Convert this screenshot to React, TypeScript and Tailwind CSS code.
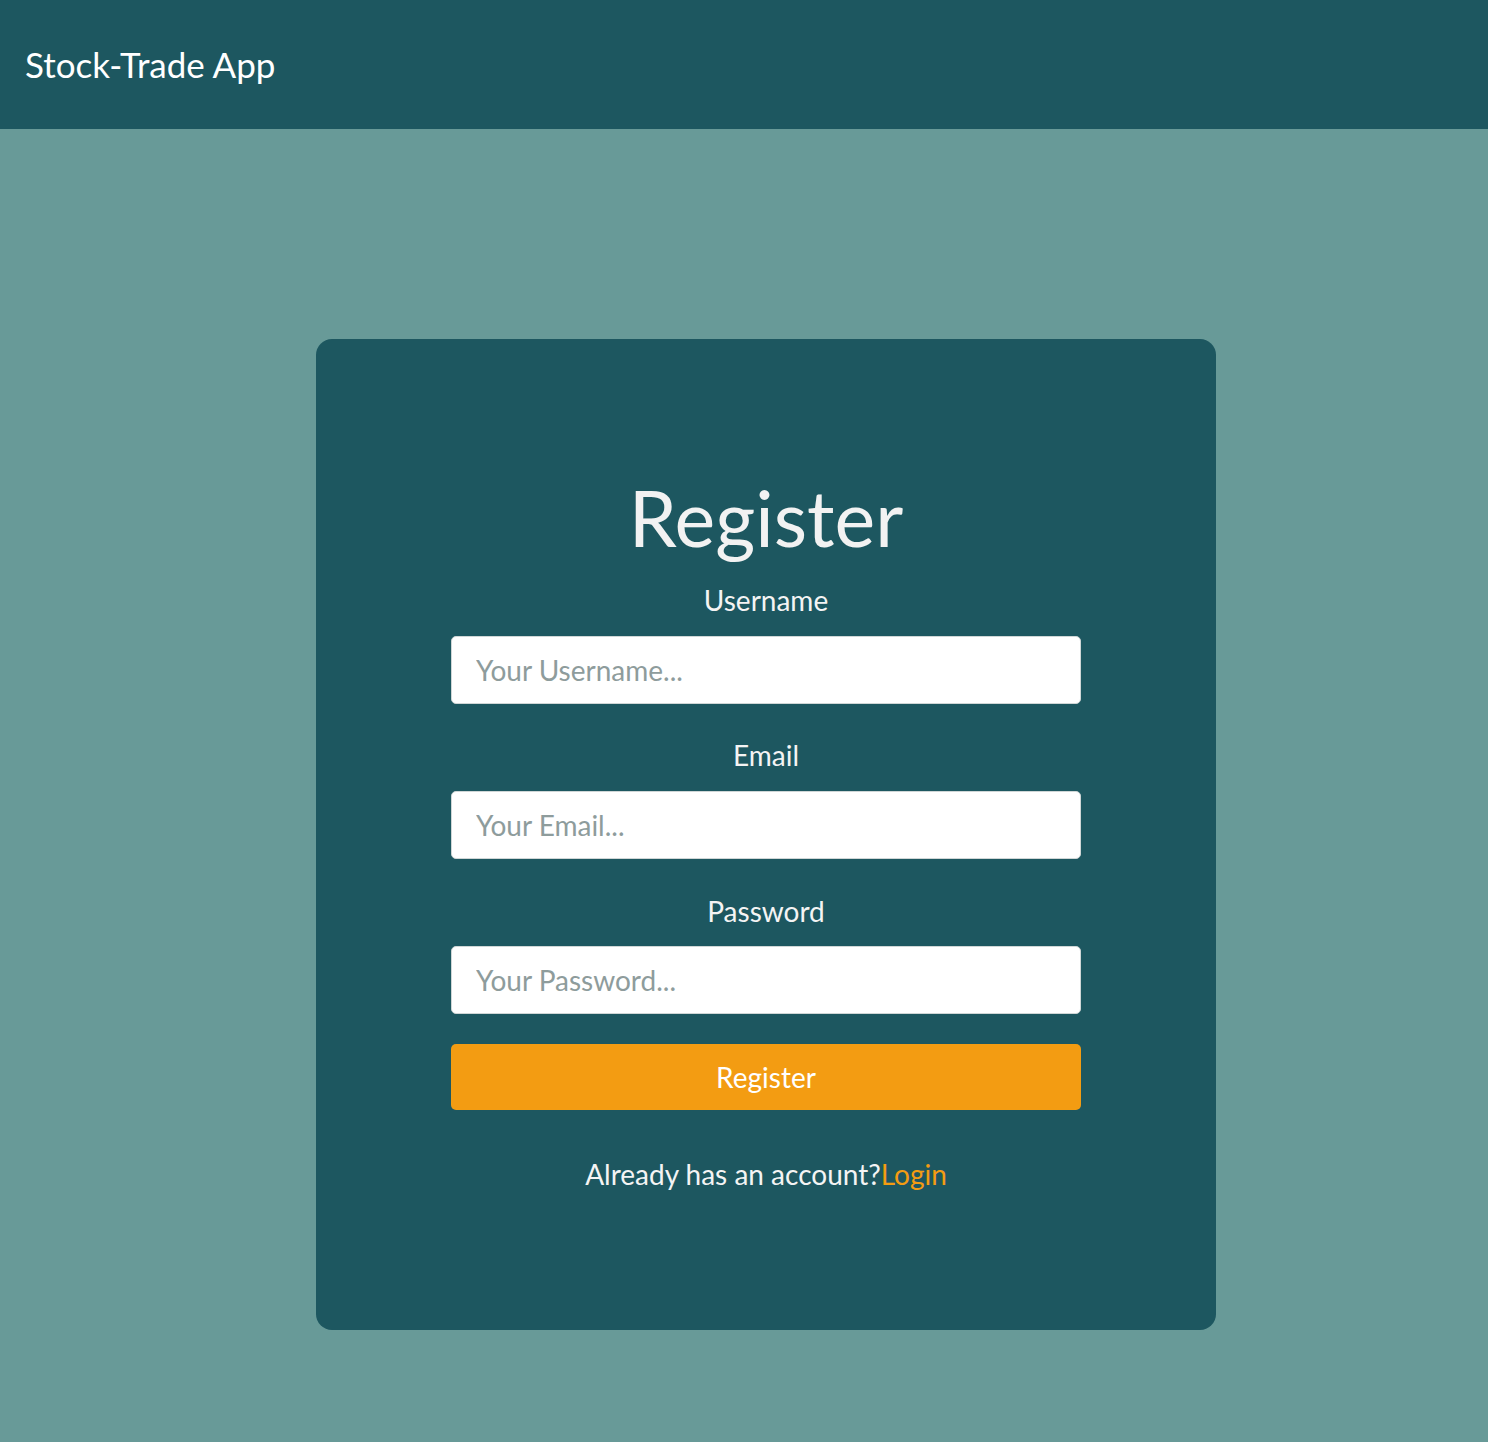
import { useState } from "react";

const inputCls =
  "w-full h-[68px] rounded-[5px] border border-[#cfd6d6] bg-white px-[24px] text-[28px] text-[#333] placeholder:text-[#8e9c9c] outline-none";

const labelCls = "block text-center text-[28px] leading-[1.2] text-[#f4f4f4]";

const App = () => {
  const [username, setUsername] = useState("");
  const [email, setEmail] = useState("");
  const [password, setPassword] = useState("");

  return (
    <div className="min-h-[1442px] w-full bg-[#689a98] font-['Lato','Liberation_Sans',sans-serif]">
      {/* top nav */}
      <header className="flex h-[129px] items-center bg-[#1d5760] pl-[25px]">
        <span className="text-[35px] leading-none text-white">Stock-Trade App</span>
      </header>

      <main className="flex justify-center pl-[44px] pt-[210px]">
        <div className="w-[900px] rounded-[16px] bg-[#1d5760] px-[135px] pt-[132px] pb-[138px]">
          <h1 className="text-center text-[77px] leading-[1.2] text-[#f2f2f2]">Register</h1>

          <form onSubmit={(e) => e.preventDefault()} className="flex flex-col">
            <label className={`${labelCls} mt-[21px] mb-[18px]`}>Username</label>
            <input
              className={inputCls}
              placeholder="Your Username..."
              value={username}
              onChange={(e) => setUsername(e.target.value)}
            />

            <label className={`${labelCls} mt-[35px] mb-[18px]`}>Email</label>
            <input
              className={inputCls}
              placeholder="Your Email..."
              value={email}
              onChange={(e) => setEmail(e.target.value)}
            />

            <label className={`${labelCls} mt-[36px] mb-[18px]`}>Password</label>
            <input
              type="password"
              className={inputCls}
              placeholder="Your Password..."
              value={password}
              onChange={(e) => setPassword(e.target.value)}
            />

            <button
              type="submit"
              className="mt-[30px] h-[66px] w-full rounded-[5px] bg-[#f39c12] text-[28px] text-white"
            >
              Register
            </button>
          </form>

          <p className="mt-[48px] text-center text-[28px] leading-[1.2] text-[#f4f4f4]">
            Already has an account?<a href="#" className="text-[#f39c12]">Login</a>
          </p>
        </div>
      </main>
    </div>
  );
};

export default App;
